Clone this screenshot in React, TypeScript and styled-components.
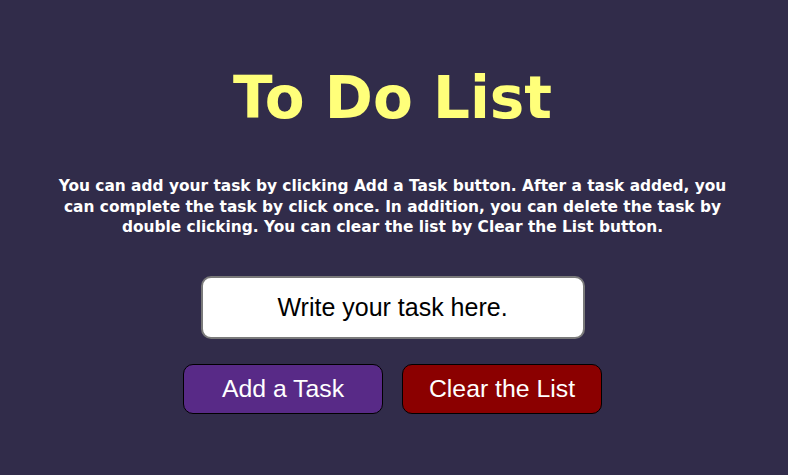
import React from "react";
import styled, { createGlobalStyle } from "styled-components";

const Global = createGlobalStyle`
  html, body { margin: 0; padding: 0; background: #312c4a; }
  body { font-family: "Liberation Sans", Arial, sans-serif; }
`;

const Page = styled.main`
  display: flex;
  flex-direction: column;
  align-items: center;
  padding: 60px 3px 0 0;
  min-height: 475px;
  box-sizing: border-box;
`;

const Title = styled.h1`
  margin: 0;
  font-family: "DejaVu Sans", Verdana, sans-serif;
  font-weight: 700;
  font-size: 58px;
  line-height: 76px;
  color: #ffff7a;
`;

const Info = styled.p`
  margin: 40px 0 0;
  width: 690px;
  text-align: center;
  font-family: "DejaVu Sans", Verdana, sans-serif;
  font-weight: 700;
  font-size: 15.4px;
  line-height: 20.5px;
  color: #ffffff;
`;

const TaskInput = styled.input`
  margin-top: 38px;
  width: 384px;
  height: 63px;
  box-sizing: border-box;
  border: 2px solid #7a7a7a;
  border-radius: 10px;
  background: #ffffff;
  text-align: center;
  font-family: "Liberation Sans", Arial, sans-serif;
  font-size: 25px;
  color: #000;
  outline: none;
  &::placeholder { color: #000; opacity: 1; }
`;

const Buttons = styled.div`
  display: flex;
  gap: 19px;
  margin-top: 25px;
`;

const Button = styled.button<{ $bg: string }>`
  width: 200px;
  height: 50px;
  border: 1px solid #000;
  border-radius: 10px;
  background: ${(p) => p.$bg};
  color: #fff;
  font-family: "Liberation Sans", Arial, sans-serif;
  font-size: 24.8px;
  cursor: pointer;
`;

export default function App() {
  return (
    <>
      <Global />
      <Page>
        <Title>To Do List</Title>
        <Info>
          You can add your task by clicking Add a Task button. After a task added, you can complete the task by
          click once. In addition, you can delete the task by double clicking. You can clear the list by Clear the
          List button.
        </Info>
        <TaskInput placeholder="Write your task here." />
        <Buttons>
          <Button $bg="#582a87">Add a Task</Button>
          <Button $bg="#8b0000">Clear the List</Button>
        </Buttons>
      </Page>
    </>
  );
}
